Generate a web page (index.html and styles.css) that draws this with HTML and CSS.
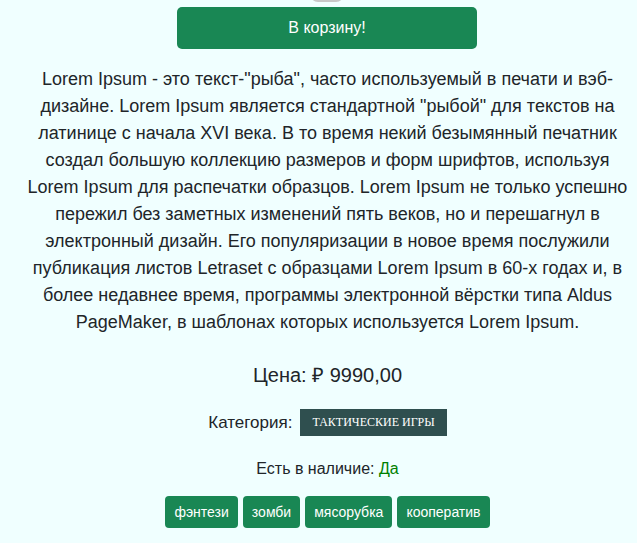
FILE: index.html
```html
<!DOCTYPE html>
<html lang="ru">
<head>
<meta charset="utf-8">
<link rel="stylesheet" href="styles.css">
</head>
<body>
<main class="product">
  <div class="thumb-edge"></div>
  <button class="buy">В корзину!</button>
  <p class="desc">Lorem Ipsum - это текст-"рыба", часто используемый в печати и вэб-дизайне. Lorem Ipsum является стандартной "рыбой" для текстов на латинице с начала XVI века. В то время некий безымянный печатник создал большую коллекцию размеров и форм шрифтов, используя Lorem Ipsum для распечатки образцов. Lorem Ipsum не только успешно пережил без заметных изменений пять веков, но и перешагнул в электронный дизайн. Его популяризации в новое время послужили публикация листов Letraset с образцами Lorem Ipsum в 60-х годах и, в более недавнее время, программы электронной вёрстки типа Aldus PageMaker, в шаблонах которых используется Lorem Ipsum.</p>
  <div class="price">Цена: ₽ 9990,00</div>
  <div class="category">Категория: <span class="cat-badge">Тактические игры</span></div>
  <div class="stock">Есть в наличие: <span class="yes">Да</span></div>
  <div class="tags">
    <span class="tag">фэнтези</span>
    <span class="tag">зомби</span>
    <span class="tag">мясорубка</span>
    <span class="tag">кооператив</span>
  </div>
</main>
</body>
</html>
```
FILE: styles.css
```css
html, body {
  margin: 0;
  padding: 0;
  background: #f0ffff;
}
body {
  font-family: "Liberation Sans", Arial, sans-serif;
  color: #212529;
  overflow: hidden;
}
.product {
  position: relative;
  margin-left: 18px;
  display: flex;
  flex-direction: column;
  align-items: center;
  text-align: center;
  padding-top: 7px;
}
.thumb-edge {
  position: absolute;
  top: -14px;
  left: 292px;
  width: 34px;
  height: 16px;
  border-radius: 8px;
  background: #c8c8c8;
}
.buy {
  width: 300px;
  height: 42px;
  background: #198754;
  color: #fff;
  border: none;
  border-radius: 5px;
  font-family: "Liberation Sans", Arial, sans-serif;
  font-size: 16px;
  padding: 0;
  margin-left: -1px;
}
.desc {
  margin: 17px 0 0;
  width: 602px;
  font-size: 18px;
  line-height: 27px;
}
.price {
  margin-top: 24px;
  font-size: 20px;
  line-height: 30px;
}
.category {
  margin-top: 19px;
  font-size: 17px;
  display: flex;
  align-items: center;
  gap: 8px;
}
.cat-badge {
  display: inline-block;
  background: #2f4f4f;
  color: #fff;
  font-family: "Liberation Serif", "Times New Roman", serif;
  text-transform: uppercase;
  font-size: 12px;
  line-height: 27px;
  padding: 0 12px;
}
.stock {
  margin-top: 23px;
  font-size: 16px;
  line-height: 20px;
}
.yes {
  color: #008000;
}
.tags {
  margin-top: 17px;
  display: flex;
  gap: 5px;
}
.tag {
  background: #198754;
  color: #fff;
  font-size: 14px;
  line-height: 32px;
  padding: 0 9px;
  border-radius: 4px;
}
```
